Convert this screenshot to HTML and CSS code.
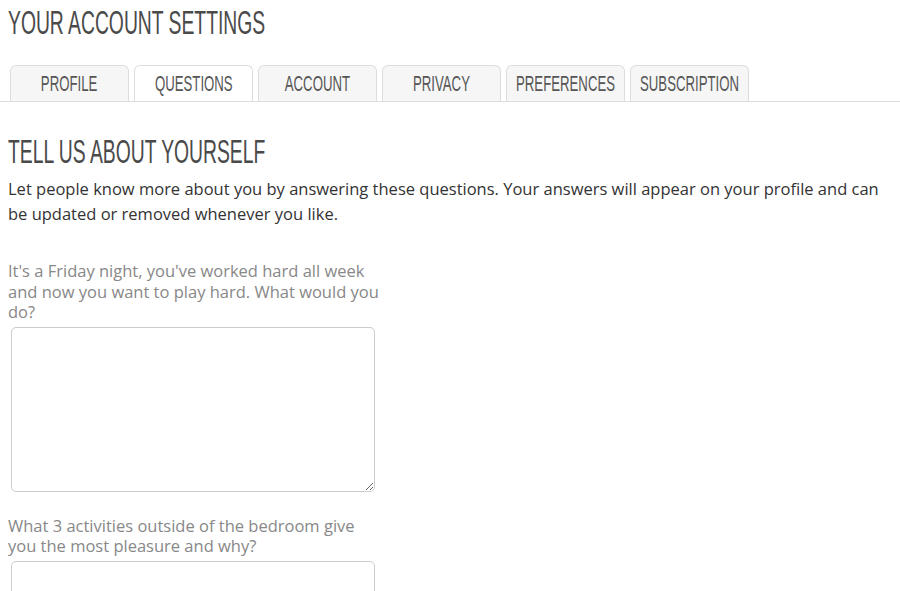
FILE: index.html
```html
<!DOCTYPE html>
<html lang="en">
<head>
   <meta charset="utf-8"/>
   <meta name="viewport" content="width=device-width, initial-scale=1" />
   <link rel="stylesheet" href="styles.css">
</head>
<body>
<!--page title-->
<h1 class="page-title"><span class="narrow">YOUR ACCOUNT SETTINGS</span></h1>

<!--settings tabs-->
<nav class="tabs">
   <a class="tab" href="#"><span class="narrow">PROFILE</span></a>
   <a class="tab active" href="#"><span class="narrow">QUESTIONS</span></a>
   <a class="tab" href="#"><span class="narrow">ACCOUNT</span></a>
   <a class="tab" href="#"><span class="narrow">PRIVACY</span></a>
   <a class="tab" href="#"><span class="narrow">PREFERENCES</span></a>
   <a class="tab" href="#"><span class="narrow">SUBSCRIPTION</span></a>
</nav>

<!--questions form-->
<section class="content">
   <h2 class="section-title"><span class="narrow">TELL US ABOUT YOURSELF</span></h2>
   <p class="intro">Let people know more about you by answering these questions. Your answers will appear on your profile and can be updated or removed whenever you like.</p>

   <div class="question">
      <label for="q1">It's a Friday night, you've worked hard all week and now you want to play hard. What would you do?</label>
      <textarea id="q1"></textarea>
   </div>

   <div class="question">
      <label for="q2">What 3 activities outside of the bedroom give you the most pleasure and why?</label>
      <textarea id="q2"></textarea>
   </div>
</section>
</body>
</html>
```
FILE: styles.css
```css
/* base */
body {
   margin: 0;
   background: #fff;
   font-family: "Open Sans", "Liberation Sans", sans-serif;
   color: #333;
   overflow: hidden;
}

/* condensed headline look */
.narrow {
   display: inline-block;
   font-family: "Liberation Sans Narrow", "Liberation Sans", sans-serif;
   font-weight: normal;
   transform: scaleX(0.568);
   transform-origin: left center;
   white-space: nowrap;
}

.page-title {
   margin: 0;
   padding: 2px 8px 0;
   font-size: 34px;
   line-height: 38px;
   font-weight: normal;
   color: #4a4a4a;
}

/* tabs */
.tabs {
   display: flex;
   gap: 5px;
   margin-top: 24px;
   padding-left: 10px;
   border-bottom: 1px solid #ddd;
   height: 36px;
}

.tab {
   width: 119px;
   box-sizing: border-box;
   height: 36px;
   display: flex;
   align-items: center;
   justify-content: center;
   background: #f6f6f6;
   border: 1px solid #ddd;
   border-bottom: none;
   border-radius: 6px 6px 0 0;
   color: #555;
   text-decoration: none;
   font-size: 22px;
}

.tab .narrow {
   transform: scaleX(0.6);
   transform-origin: center center;
}

.tab.active {
   background: #fff;
}

/* form */
.content {
   padding: 0 8px;
}

.section-title {
   margin: 0;
   padding-top: 29px;
   font-size: 34px;
   line-height: 38px;
   font-weight: normal;
   color: #4a4a4a;
}

.intro {
   margin: 6px 0 0;
   font-size: 16.5px;
   line-height: 25px;
   color: #333;
}

.question {
   margin-top: 24px;
   width: 375px;
}

.intro + .question {
   margin-top: 35px;
}

.question label {
   display: block;
   font-size: 16.5px;
   line-height: 20.5px;
   color: #888;
}

.question textarea {
   display: block;
   box-sizing: border-box;
   width: 364px;
   height: 165px;
   margin: 4px 0 0 3px;
   border: 1px solid #ccc;
   border-radius: 5px;
   background: #fff;
}
```
